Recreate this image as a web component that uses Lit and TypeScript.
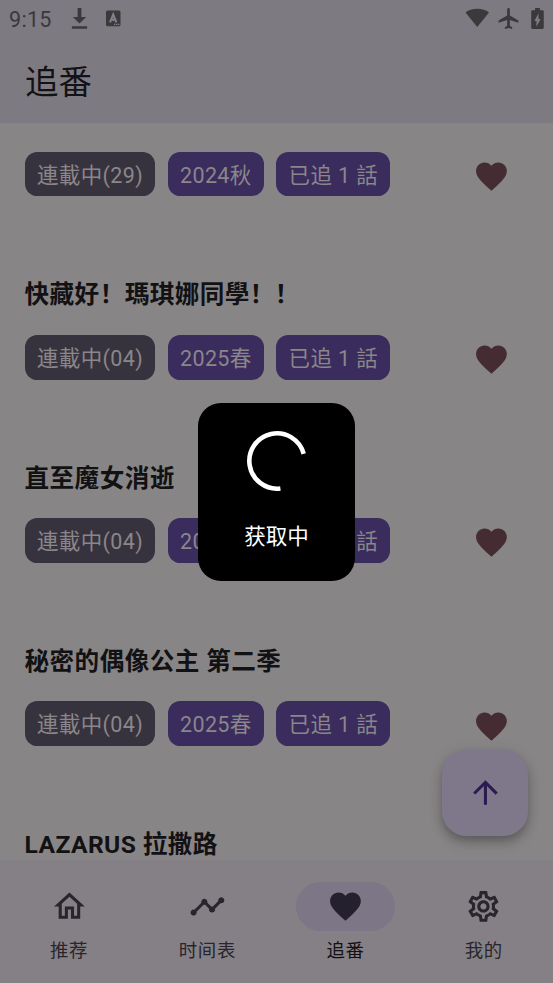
import { LitElement, html, css, svg } from "lit";
import { customElement, property } from "lit/decorators.js";

const ICONS: Record<string, string> = {
  heart: "M12 21.35l-1.45-1.32C5.4 15.36 2 12.28 2 8.5 2 5.42 4.42 3 7.5 3c1.74 0 3.41.81 4.5 2.09C13.09 3.81 14.76 3 16.5 3 19.58 3 22 5.42 22 8.5c0 3.78-3.4 6.86-8.55 11.54L12 21.35z",
  up: "M4 12l1.41 1.41L11 7.83V20h2V7.83l5.58 5.59L20 12l-8-8-8 8z",
  home: "M12 5.69l5 4.5V18h-2v-6H9v6H7v-7.81l5-4.5M12 3L2 12h3v8h6v-6h2v6h6v-8h3L12 3z",
  timeline: "M23 8c0 1.1-.9 2-2 2-.18 0-.35-.02-.51-.07l-3.56 3.55c.05.16.07.34.07.52 0 1.1-.9 2-2 2s-2-.9-2-2c0-.18.02-.36.07-.52l-2.55-2.55c-.16.05-.34.07-.52.07s-.36-.02-.52-.07l-4.55 4.56c.05.16.07.33.07.51 0 1.1-.9 2-2 2s-2-.9-2-2 .9-2 2-2c.18 0 .35.02.51.07l4.56-4.55C8.02 9.36 8 9.18 8 9c0-1.1.9-2 2-2s2 .9 2 2c0 .18-.02.36-.07.52l2.55 2.55c.16-.05.34-.07.52-.07s.36.02.52.07l3.55-3.56C19.02 8.35 19 8.18 19 8c0-1.1.9-2 2-2s2 .9 2 2z",
  settings: "M19.43 12.98c.04-.32.07-.64.07-.98 0-.34-.03-.66-.07-.98l2.11-1.65c.19-.15.24-.42.12-.64l-2-3.46c-.09-.16-.26-.25-.44-.25-.06 0-.12.01-.17.03l-2.49 1c-.52-.4-1.08-.73-1.69-.98l-.38-2.65C14.46 2.18 14.25 2 14 2h-4c-.25 0-.46.18-.49.42l-.38 2.65c-.61.25-1.17.59-1.69.98l-2.49-1c-.06-.02-.12-.03-.18-.03-.17 0-.34.09-.43.25l-2 3.46c-.13.22-.07.49.12.64l2.11 1.65c-.04.32-.07.65-.07.98 0 .33.03.66.07.98l-2.11 1.65c-.19.15-.24.42-.12.64l2 3.46c.09.16.26.25.44.25.06 0 .12-.01.17-.03l2.49-1c.52.4 1.08.73 1.69.98l.38 2.65c.03.24.24.42.49.42h4c.25 0 .46-.18.49-.42l.38-2.65c.61-.25 1.17-.59 1.69-.98l2.49 1c.06.02.12.03.18.03.17 0 .34-.09.43-.25l2-3.46c.12-.22.07-.49-.12-.64l-2.11-1.65zm-1.98-1.71c.04.31.05.52.05.73 0 .21-.02.43-.05.73l-.14 1.13.89.7 1.08.84-.7 1.21-1.27-.51-1.04-.42-.9.68c-.43.32-.84.56-1.25.73l-1.06.43-.16 1.13-.2 1.35h-1.4l-.19-1.35-.16-1.13-1.06-.43c-.43-.18-.83-.41-1.23-.71l-.91-.7-1.06.43-1.27.51-.7-1.21 1.08-.84.89-.7-.14-1.13c-.03-.31-.05-.54-.05-.74s.02-.43.05-.73l.14-1.13-.89-.7-1.08-.84.7-1.21 1.27.51 1.04.42.9-.68c.43-.32.84-.56 1.25-.73l1.06-.43.16-1.13.2-1.35h1.39l.19 1.35.16 1.13 1.06.43c.43.18.83.41 1.23.71l.91.7 1.06-.43 1.27-.51.7 1.21-1.07.85-.89.7.14 1.13zM12 8c-2.21 0-4 1.79-4 4s1.79 4 4 4 4-1.79 4-4-1.79-4-4-4zm0 6c-1.1 0-2-.9-2-2s.9-2 2-2 2 .9 2 2-.9 2-2 2z",
  download: "M10.2 2h3.600v8.500h4.600L12 16.900 5.600 10.500h4.600zM4.700 19.500h14.600v2.300H4.700z",
  wifi: "M12 20.5L.5 6.400C3.4 3.9 7.600 2.700 12 2.700s8.600 1.200 11.500 3.700z",
  plane: "M21.500 16v-2l-8.200-5V3.500c0-.83-.57-1.500-1.300-1.500s-1.300.67-1.300 1.500V9l-8.200 5v2l8.200-2.500V19l-2.200 1.500V22l3.500-1 3.500 1v-1.500L13.300 19v-5.500l8.200 2.500z",
  battery: "M16.800 4H14.300V2H9.700v2H7.200C6.400 4 6 4.600 6 5.330v15.330C6 21.400 6.400 22 7.200 22h9.600c.74 0 1.200-.6 1.200-1.330V5.330C18 4.600 17.500 4 16.800 4zM11 20v-5.500H9L13 7v5.500h2L11 20z",
};

@customElement("md-icon")
class MdIcon extends LitElement {
  @property() name = "";
  static styles = css`
    :host { display: block; width: 36.9px; height: 36.9px; }
    .glyph { display: block; width: 100%; height: 100%; fill: currentColor; }
  `;
  render() {
    return html`<svg class="glyph" viewBox="0 0 24 24">${svg`<path d=${ICONS[this.name]}></path>`}</svg>`;
  }
}

@customElement("follow-row")
class FollowRow extends LitElement {
  @property() name = "";
  @property() status = "";
  @property() season = "";
  static styles = css`
    :host { display: block; }
    .title {
      height: 36px; line-height: 36px; margin-bottom: 21.300px;
      font-size: 24.600px; font-weight: 700; letter-spacing: 0.42px; color: #121113; white-space: pre;
    }
    .meta { display: flex; align-items: center; height: 44.800px; gap: 12.300px; }
    .chip {
      box-sizing: border-box; height: 44.800px; line-height: 47px; padding: 0 12.300px;
      border-radius: 12.300px; font-size: 21.500px; letter-spacing: 0.38px;
      background: #3a2c5d; color: #8a8689; white-space: pre;
    }
    .muted { background: #37333e; }
    .fav { margin-left: auto; padding: 5px 43px 0 0; color: #452c33; }
  `;
  render() {
    return html`
      ${this.name ? html`<div class="title">${this.name}</div>` : null}
      ${this.status ? html`<div class="meta">
        <div class="chip muted">${this.status}</div>
        <div class="chip">${this.season}</div>
        <div class="chip">已追 1 話</div>
        <md-icon class="fav" name="heart"></md-icon>
      </div>` : null}`;
  }
}

@customElement("app-root")
class AppRoot extends LitElement {
  static styles = css`
    :host {
      position: relative; display: flex; flex-direction: column; width: 553px; height: 983px;
      overflow: hidden; background: #888587;
      font-family: Roboto, "Noto Sans CJK SC", sans-serif;
    }
    .top { height: 123px; flex: none; background: #7e7a81; }
    .status { display: flex; align-items: center; height: 37px; padding: 0 3px 0 9px; color: #3a393b; }
    .clock { width: 58px; font-size: 21.500px; letter-spacing: 0.3px; padding-top: 1px; }
    .down { width: 25px; height: 25px; }
    .badge { width: 15px; height: 17px; margin-left: 14px; }
    .wifi { width: 24.500px; height: 24.500px; margin-left: auto; }
    .plane { width: 25px; height: 25px; margin-left: 7px; }
    .battery { width: 25px; height: 25px; margin-left: 4px; }
    .heading { padding-left: 25px; height: 86px; line-height: 91px; font-size: 33.500px; color: #131215; }
    .list { flex: 1; min-height: 0; overflow: hidden; padding: 28.600px 0 0 24.600px; display: flex; flex-direction: column; gap: 81.100px; }
    .nav { flex: none; height: 122.900px; display: flex; background: #858085; }
    .tab { flex: 1; display: flex; flex-direction: column; align-items: center; padding-top: 21.800px; color: #28252c; }
    .pill { display: flex; align-items: center; justify-content: center; width: 98.300px; height: 49.200px; border-radius: 25px; }
    .label { margin-top: 7px; line-height: 25px; font-size: 18.400px; letter-spacing: 0.77px; }
    .active .pill { background: #7c7686; color: #25202d; }
    .active .label { color: #111012; }
    .fab {
      position: absolute; left: 442.400px; top: 749.500px; width: 86px; height: 86px; border-radius: 24.600px;
      display: flex; align-items: center; justify-content: center; background: #7f778a; color: #2a1c51;
      box-shadow: 0 5px 8px -1px rgba(0,0,0,.22), 0 8px 14px rgba(0,0,0,.1), 0 1px 16px rgba(0,0,0,.07);
    }
    .toast {
      position: absolute; left: 197.800px; top: 402.500px; width: 157.500px; height: 178px; border-radius: 23px;
      background: #000; color: #fff; display: flex; flex-direction: column; align-items: center;
      font-size: 21.500px; padding-top: 28.200px; box-sizing: border-box;
    }
    .spinner { width: 60px; height: 60px; display: block; }
    .message { margin-top: 30px; line-height: 32px; }
  `;

  private rows = [
    { name: "", status: "連載中(29)", season: "2024秋" },
    { name: "快藏好！瑪琪娜同學！！", status: "連載中(04)", season: "2025春" },
    { name: "直至魔女消逝", status: "連載中(04)", season: "2025春" },
    { name: "秘密的偶像公主 第二季", status: "連載中(04)", season: "2025春" },
    { name: "LAZARUS 拉撒路", status: "", season: "" },
  ];
  private tabs = [["home", "推荐"], ["timeline", "时间表"], ["heart", "追番"], ["settings", "我的"]];

  render() {
    return html`
      <div class="top">
        <div class="status">
          <span class="clock">9:15</span>
          <md-icon class="down" name="download"></md-icon>
          <svg class="badge" viewBox="0 0 15 17">
            <rect y=".5" width="14.500" height="15.800" rx="1.500" fill="#3a393b"></rect>
            <path d="M4 12.300L7.200 4.500L10.400 12.300M5.200 9.700H9.200" fill="none" stroke="#858188" stroke-width="2"></path>
            <path d="M8 14.300h5.500" stroke="#858188" stroke-width="1.200" stroke-dasharray="1.300 .7"></path>
          </svg>
          <md-icon class="wifi" name="wifi"></md-icon>
          <md-icon class="plane" name="plane"></md-icon>
          <md-icon class="battery" name="battery"></md-icon>
        </div>
        <div class="heading">追番</div>
      </div>
      <div class="list">
        ${this.rows.map((r) => html`<follow-row .name=${r.name} .status=${r.status} .season=${r.season}></follow-row>`)}
      </div>
      <div class="nav">
        ${this.tabs.map(([icon, label]) => html`
          <div class="tab ${icon === "heart" ? "active" : ""}">
            <div class="pill"><md-icon name=${icon}></md-icon></div>
            <div class="label">${label}</div>
          </div>`)}
      </div>
      <div class="fab"><md-icon name="up"></md-icon></div>
      <div class="toast">
        <svg class="spinner" viewBox="0 0 60 60">
          <path d="M56.700 22.850A27.650 27.650 0 1 0 33.400 57.450" fill="none" stroke="#fff" stroke-width="4.600"></path>
        </svg>
        <div class="message">获取中</div>
      </div>`;
  }
}
